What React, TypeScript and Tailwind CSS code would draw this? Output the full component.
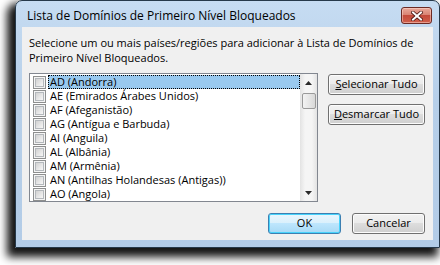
import React from "react";

const items = [
  "AD (Andorra)",
  "AE (Emirados Árabes Unidos)",
  "AF (Afeganistão)",
  "AG (Antígua e Barbuda)",
  "AI (Anguila)",
  "AL (Albânia)",
  "AM (Armênia)",
  "AN (Antilhas Holandesas (Antigas))",
  "AO (Angola)",
];

function Checkbox() {
  return (
    <div className="w-[13px] h-[13px] border border-[#8e8f8f] bg-[#f4f4f4] p-[1px] shrink-0">
      <div className="w-full h-full border border-[#b4b8bc] bg-gradient-to-br from-[#d2d2d2] to-[#f7f7f7]" />
    </div>
  );
}

function Btn({ children, def }: { children: React.ReactNode; def?: boolean }) {
  if (def) {
    return (
      <div className="w-[73px] h-[21px] rounded-[3px] border border-[#3c7fb1] shadow-[inset_0_0_0_1px_#48d3fb] bg-[linear-gradient(#eaf6fd_0%,#d9f0fc_50%,#bee6fd_50%,#a7d9f5_100%)] flex items-center justify-center text-[#000]">
        {children}
      </div>
    );
  }
  return (
    <div className="w-[73px] h-[21px] rounded-[3px] border border-[#707070] shadow-[inset_0_0_0_1px_#fcfcfc] bg-[linear-gradient(#f2f2f2_0%,#ebebeb_50%,#dddddd_50%,#cfcfcf_100%)] flex items-center justify-center text-[#000]">
      {children}
    </div>
  );
}

function SideBtn({ children }: { children: React.ReactNode }) {
  return (
    <div className="w-[97px] h-[21px] rounded-[3px] border border-[#707070] shadow-[inset_0_0_0_1px_#fcfcfc] bg-[linear-gradient(#f2f2f2_0%,#ebebeb_50%,#dddddd_50%,#cfcfcf_100%)] flex items-center justify-center text-[#000]">
      {children}
    </div>
  );
}

export default function App() {
  return (
    <div
      className="w-[440px] h-[265px] bg-white overflow-hidden pl-[15px] text-[11px] text-[#000]"
      style={{ fontFamily: '"Open Sans", "Noto Sans", sans-serif' }}
    >
      <div className="w-[425px] h-[248px] rounded-t-[7px] border border-[#26394a] bg-[linear-gradient(#c6dcf2,#b6cfe9_40%,#b3cce7)] shadow-[-5px_6px_9px_3px_rgba(0,0,0,0.92)] flex flex-col">
        {/* title bar */}
        <div className="h-[26px] flex justify-between pl-[11px] pr-[7px]">
          <div className="pt-[7px] leading-[16px] text-[12px] text-[#000]">
            Lista de Domínios de Primeiro Nível Bloqueados
          </div>
          <div className="mt-[6px] w-[31px] h-[17px] rounded-[3px] border border-[#6b2a24] bg-[linear-gradient(#e9a99b_0%,#d98474_45%,#c44b3b_50%,#d0604c_100%)] shadow-[inset_0_0_0_1px_rgba(255,220,210,0.5)] flex items-center justify-center">
            <svg width="12" height="10" viewBox="0 0 12 10">
              <path d="M2 1.5 L10 8.5 M10 1.5 L2 8.5" stroke="#4a1510" strokeWidth="3.6" strokeLinecap="square" />
              <path d="M2 1.5 L10 8.5 M10 1.5 L2 8.5" stroke="#ffffff" strokeWidth="2" strokeLinecap="square" />
            </svg>
          </div>
        </div>
        {/* client */}
        <div className="mx-[6px] h-[213px] bg-[#f0f0f0] flex flex-col">
          <div className="pt-[8px] pl-[7px] pr-[8px] leading-[15px]">
            <div>Selecione um ou mais países/regiões para adicionar à Lista de Domínios de</div>
            <div>Primeiro Nível Bloqueados.</div>
          </div>
          <div className="mt-[8px] pl-[7px] flex">
            <div className="w-[289px] h-[129px] border border-[#828790] bg-white flex">
              <div className="w-[270px] pt-[1px] flex flex-col">
                {items.map((it, i) => (
                  <div key={it} className="h-[14px] flex items-center pl-[3px]">
                    <Checkbox />
                    <div
                      className={
                        i === 0
                          ? "ml-[2px] flex-1 h-[14px] pl-[1px] leading-[13px] bg-[#99c9ef] border border-dotted border-[#000]"
                          : "ml-[2px] flex-1 h-[14px] pl-[1px] leading-[14px] border border-transparent"
                      }
                    >
                      <span className="relative -top-[1px]">{it}</span>
                    </div>
                  </div>
                ))}
              </div>
              <div className="w-[17px] flex flex-col bg-[linear-gradient(90deg,#e3e3e3,#f5f5f5_30%,#f5f5f5_70%,#e3e3e3)]">
                <div className="h-[17px] flex items-center justify-center">
                  <svg width="7" height="4" viewBox="0 0 7 4">
                    <path d="M3.5 0 L7 4 L0 4 Z" fill="#2a2a2a" />
                  </svg>
                </div>
                <div className="mt-[2px] ml-[2px] w-[14px] h-[16px] rounded-[2px] border border-[#9a9a9a] bg-[linear-gradient(90deg,#f3f3f3,#e6e6e6_50%,#d8d8d8)]" />
                <div className="flex-1" />
                <div className="h-[17px] flex items-center justify-center">
                  <svg width="7" height="4" viewBox="0 0 7 4">
                    <path d="M0 0 L7 0 L3.5 4 Z" fill="#2a2a2a" />
                  </svg>
                </div>
              </div>
            </div>
            <div className="ml-[10px] mt-[1px] flex flex-col gap-[9px]">
              <SideBtn>
                <span>
                  <span className="underline">S</span>elecionar Tudo
                </span>
              </SideBtn>
              <SideBtn>
                <span>
                  <span className="underline">D</span>esmarcar Tudo
                </span>
              </SideBtn>
            </div>
          </div>
          <div className="mt-[11px] pr-[8px] flex justify-end gap-[11px]">
            <Btn def>OK</Btn>
            <Btn>Cancelar</Btn>
          </div>
        </div>
      </div>
    </div>
  );
}
